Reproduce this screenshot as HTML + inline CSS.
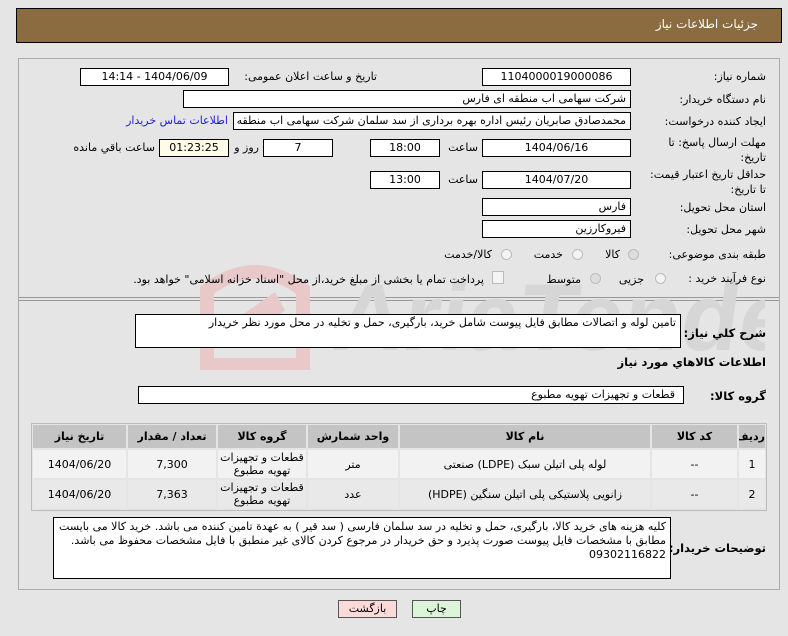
<!DOCTYPE html>
<html><head><meta charset="utf-8"><style>
body{margin:0;width:788px;height:636px;background:#e5e5e5;font-family:"DejaVu Sans","Liberation Sans",sans-serif;font-size:11px;color:#000;position:relative;overflow:hidden}
.a{position:absolute;white-space:nowrap}
.box{position:absolute;background:#fff;border:1px solid #000;box-sizing:border-box;direction:rtl;padding:0 4px;line-height:15px;font-size:11px;overflow:hidden;white-space:nowrap}
.c{text-align:center}
.l{position:absolute;direction:rtl;text-align:right;white-space:nowrap}
.b{font-weight:bold;font-size:11.5px}
.rad{position:absolute;width:11px;height:11px;border-radius:50%;border:1px solid #bbb;background:#f4f4f4;box-sizing:border-box}
table{border-collapse:separate;border-spacing:2px;font-size:11px;table-layout:fixed}
td{text-align:center;padding:0;overflow:hidden}
</style></head><body>
<div class="a" style="left:16px;top:8px;width:766px;height:35px;background:#8b6b40;border:1px solid #000;box-sizing:border-box"></div>
<div class="l" style="right:30px;top:17px;color:#fff;font-size:12px">جزئیات اطلاعات نیاز</div>
<div class="a" style="left:18px;top:58px;width:762px;height:532px;border:1px solid #aaa;box-sizing:border-box"></div>
<div class="a" style="left:19px;top:297px;width:760px;height:2px;border-top:1px solid #999;border-bottom:1px solid #999"></div>

<svg class="a" style="left:195px;top:250px" width="570" height="120">
<path d="M12 40 Q60 4 108 40 L108 115 L12 115 Z" fill="none" stroke="#e8c8c8" stroke-width="14"/>
<path d="M40 70 L80 42 L90 60 L55 90 Z" fill="#e8c8c8"/>
<text x="150" y="100" font-family="Liberation Sans" font-size="95" font-weight="bold" fill="#d6d6d6" transform="skewX(-8)">AriaTender.net</text>
</svg>

<div class="l" style="right:22px;top:70px">شماره نیاز:</div>
<div class="box c" style="left:482px;top:68px;width:149px;height:18px">1104000019000086</div>
<div class="l" style="right:411px;top:70px">تاریخ و ساعت اعلان عمومی:</div>
<div class="box c" style="left:80px;top:68px;width:149px;height:18px">1404/06/09 - 14:14</div>

<div class="l" style="right:22px;top:93px">نام دستگاه خریدار:</div>
<div class="box" style="left:183px;top:90px;width:448px;height:18px">شرکت سهامی اب منطقه ای فارس</div>

<div class="l" style="right:22px;top:115px">ایجاد کننده درخواست:</div>
<div class="box" style="left:233px;top:112px;width:398px;height:18px">محمدصادق صابریان رئیس اداره بهره برداری از سد سلمان شرکت سهامی اب منطقه</div>
<div class="l" style="right:560px;top:114px;color:#2020e0">اطلاعات تماس خریدار</div>

<div class="l" style="right:22px;top:135px;line-height:15px">مهلت ارسال پاسخ: تا<br>تاریخ:</div>
<div class="box c" style="left:482px;top:139px;width:149px;height:18px">1404/06/16</div>
<div class="l" style="right:310px;top:141px">ساعت</div>
<div class="box c" style="left:370px;top:139px;width:70px;height:18px">18:00</div>
<div class="box c" style="left:263px;top:139px;width:70px;height:18px">7</div>
<div class="l" style="right:529px;top:141px">روز و</div>
<div class="box c" style="left:159px;top:139px;width:70px;height:18px;background:#fffbe6">01:23:25</div>
<div class="l" style="right:633px;top:141px">ساعت باقي مانده</div>

<div class="l" style="right:22px;top:167px;line-height:15px">حداقل تاریخ اعتبار قیمت:<br>تا تاریخ:</div>
<div class="box c" style="left:482px;top:171px;width:149px;height:18px">1404/07/20</div>
<div class="l" style="right:310px;top:173px">ساعت</div>
<div class="box c" style="left:370px;top:171px;width:70px;height:18px">13:00</div>

<div class="l" style="right:22px;top:201px">استان محل تحویل:</div>
<div class="box" style="left:482px;top:198px;width:149px;height:18px">فارس</div>
<div class="l" style="right:22px;top:223px">شهر محل تحویل:</div>
<div class="box" style="left:482px;top:220px;width:149px;height:18px">فیروکارزین</div>

<div class="l" style="right:22px;top:248px">طبقه بندی موضوعی:</div>
<div class="rad" style="left:628px;top:249px;background:#ddd"></div>
<div class="l" style="right:168px;top:248px">کالا</div>
<div class="rad" style="left:572px;top:249px"></div>
<div class="l" style="right:225px;top:248px">خدمت</div>
<div class="rad" style="left:501px;top:249px"></div>
<div class="l" style="right:296px;top:248px">کالا/خدمت</div>

<div class="l" style="right:22px;top:272px">نوع فرآیند خرید :</div>
<div class="rad" style="left:655px;top:273px"></div>
<div class="l" style="right:144px;top:273px">جزیی</div>
<div class="rad" style="left:590px;top:273px;background:#ddd"></div>
<div class="l" style="right:207px;top:273px">متوسط</div>
<div class="a" style="left:492px;top:271px;width:10px;height:11px;border:1px solid #bbb;background:#f4f4f4"></div>
<div class="l" style="right:304px;top:273px">پرداخت تمام یا بخشی از مبلغ خرید،از محل "اسناد خزانه اسلامی" خواهد بود.</div>

<div class="l b" style="right:22px;top:326px">شرح كلي نياز:</div>
<div class="box" style="left:135px;top:314px;width:546px;height:34px;white-space:normal">تامین لوله و اتصالات مطابق فایل پیوست شامل خرید، بارگیری، حمل و تخلیه در محل مورد نظر خریدار</div>

<div class="l b" style="right:22px;top:355px">اطلاعات كالاهاي مورد نياز</div>

<div class="l b" style="right:22px;top:389px">گروه کالا:</div>
<div class="box" style="left:138px;top:386px;width:546px;height:18px;padding-right:8px">قطعات و تجهیزات تهویه مطبوع</div>

<div class="a" style="left:31px;top:423px;width:736px;height:88px;border:1px solid #bbb;box-sizing:border-box"></div>
<table class="a" style="left:31px;top:423px;width:736px;direction:rtl">
<colgroup><col style="width:26px"><col style="width:85px"><col style="width:250px"><col style="width:90px"><col style="width:88px"><col style="width:88px"><col></colgroup>
<tr style="background:#c4c4c4;font-weight:bold;height:23px"><td>ردیف</td><td>کد کالا</td><td>نام کالا</td><td>واحد شمارش</td><td>گروه کالا</td><td>تعداد / مقدار</td><td>تاریخ نیاز</td></tr>
<tr style="background:#f2f2f2;height:28px"><td>1</td><td>--</td><td>لوله پلی اتیلن سبک (LDPE) صنعتی</td><td>متر</td><td style="line-height:13px">قطعات و تجهیزات<br>تهویه مطبوع</td><td>7,300</td><td>1404/06/20</td></tr>
<tr style="background:#e9e9e9;height:28px"><td>2</td><td>--</td><td>زانویی پلاستیکی پلی اتیلن سنگین (HDPE)</td><td>عدد</td><td style="line-height:13px">قطعات و تجهیزات<br>تهویه مطبوع</td><td>7,363</td><td>1404/06/20</td></tr>
</table>

<div class="l b" style="right:22px;top:541px">توضیحات خریدار:</div>
<div class="box" style="left:53px;top:517px;width:618px;height:62px;white-space:normal;line-height:14px;padding:2px 4px">کلیه هزینه های خرید کالا، بارگیری، حمل و تخلیه در سد سلمان فارسی ( سد قیر ) به عهدة تامین کننده می باشد. خرید کالا می بایست مطابق با مشخصات فایل پیوست صورت پذیرد و حق خریدار در مرجوع کردن کالای غیر منطبق با فایل مشخصات محفوظ می باشد. 09302116822</div>

<div class="a c" style="left:338px;top:600px;width:59px;height:18px;background:#fcdada;border:1px solid #555;box-sizing:border-box;line-height:16px">بازگشت</div>
<div class="a c" style="left:412px;top:600px;width:49px;height:18px;background:#dcf5d8;border:1px solid #555;box-sizing:border-box;line-height:16px">چاپ</div>
</body></html>
